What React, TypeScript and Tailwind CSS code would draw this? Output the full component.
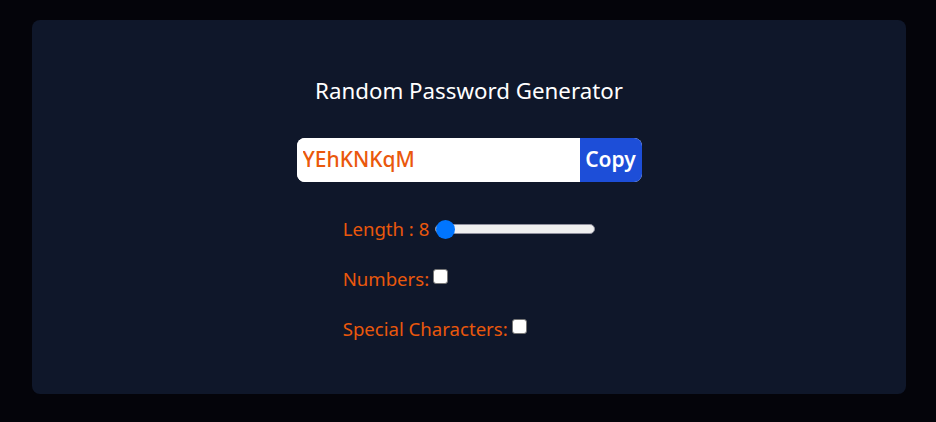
import { useState } from 'react';

export default function App() {
  const [length, setLength] = useState(8);
  const [numbers, setNumbers] = useState(false);
  const [chars, setChars] = useState(false);
  const password = 'YEhKNKqM';

  return (
    <div className="min-h-screen bg-[#04040a] pt-[20px] pb-[28px] pl-[32px] pr-[30px] font-['Noto_Sans',sans-serif]">
      <div className="h-[374px] rounded-lg bg-[#0f172a] flex flex-col items-center pt-[55px]">
        <h1 className="text-[22.3px] leading-[32px] text-white">Random Password Generator</h1>

        <div className="mt-[31px] flex w-[345px] h-[44px] rounded-lg overflow-hidden bg-white">
          <input
            type="text"
            readOnly
            value={password}
            className="flex-1 min-w-0 px-[6px] outline-none text-[21px] font-medium text-[#ea580c] bg-white"
          />
          <button className="w-[62px] bg-[#1d4ed8] text-white text-[21px] font-semibold">Copy</button>
        </div>

        <div className="mt-[34px] flex flex-col items-start gap-[24px] text-[18.6px] leading-[26px] text-[#ea580c]">
          <div className="flex items-center">
            <label>Length : {length}</label>
            <input
              type="range"
              min={8}
              max={100}
              value={length}
              onChange={(e) => setLength(Number(e.target.value))}
              className="ml-[6px] w-[160px] h-[10px] appearance-none rounded-full bg-[#efefef] border border-[#8f8f9d] cursor-pointer [&::-webkit-slider-thumb]:appearance-none [&::-webkit-slider-thumb]:w-[19px] [&::-webkit-slider-thumb]:h-[19px] [&::-webkit-slider-thumb]:rounded-full [&::-webkit-slider-thumb]:bg-[#0075ff] [&::-webkit-slider-thumb]:border-0"
            />
          </div>
          <div className="flex items-center">
            <label>Numbers:</label>
            <input
              type="checkbox"
              checked={numbers}
              onChange={() => setNumbers(!numbers)}
              className="shrink-0 ml-[4px] -mt-[6px] w-[15px] h-[15px] appearance-none rounded-[3px] bg-white border border-[#767676] checked:bg-[#0075ff] checked:border-[#0075ff]"
            />
          </div>
          <div className="flex items-center">
            <label>Special Characters:</label>
            <input
              type="checkbox"
              checked={chars}
              onChange={() => setChars(!chars)}
              className="shrink-0 ml-[4px] -mt-[6px] w-[15px] h-[15px] appearance-none rounded-[3px] bg-white border border-[#767676] checked:bg-[#0075ff] checked:border-[#0075ff]"
            />
          </div>
        </div>
      </div>
    </div>
  );
}
